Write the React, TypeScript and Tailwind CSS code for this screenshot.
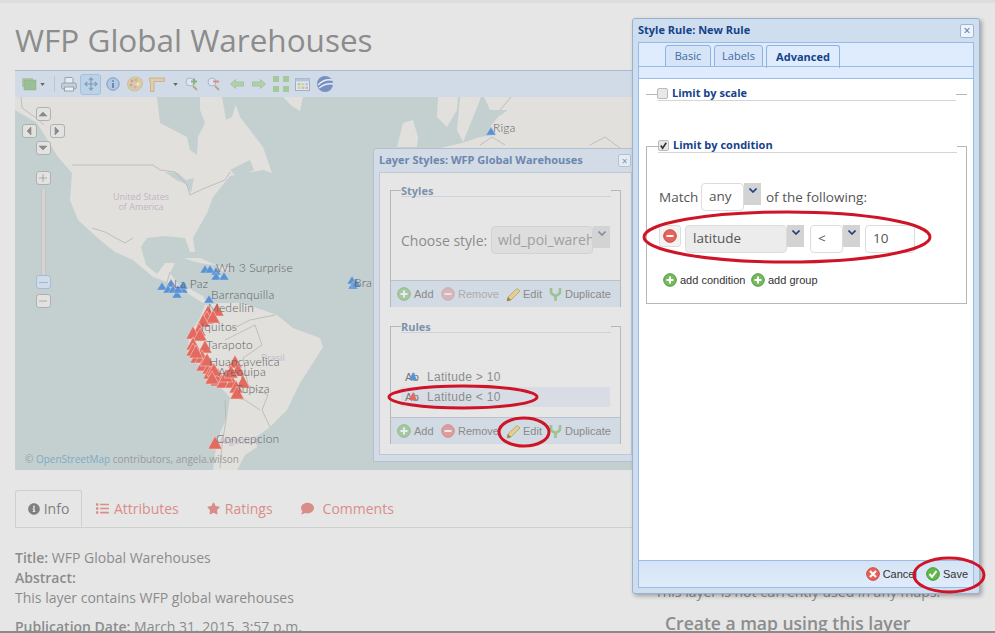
import type { ReactNode } from "react";
import { FaComment, FaInfoCircle, FaList, FaStar } from "react-icons/fa";
import { Move } from "lucide-react";

const blue = [
  [205, 269], [210, 269], [216, 271], [216, 276], [224, 276],
  [162, 286], [171, 283], [168, 289], [173, 289], [177, 294], [183, 289], [183, 285], [178, 289],
  [209, 299], [352, 280], [353, 285], [356, 283], [491, 131],
];

const red = [
  [208, 312], [217, 310], [207, 318], [213, 317], [203, 321], [199, 330], [193, 333], [200, 335],
  [193, 344], [205, 347], [193, 350], [197, 357], [202, 357], [203, 365], [209, 368], [210, 373],
  [218, 375], [217, 380], [223, 382], [235, 362], [238, 370], [232, 382], [243, 382], [236, 387],
  [237, 393], [215, 443], [196, 352], [207, 360], [214, 370], [226, 376], [231, 372], [212, 378],
];

const labels: [string, number, number][] = [
  ["Wh 3 Surprise", 216, 272],
  ["La Paz", 174, 288],
  ["Barranquilla", 211, 299],
  ["Medellin", 208, 312],
  ["Iquitos", 201, 331],
  ["Tarapoto", 206, 349],
  ["Huancavelica", 209, 366],
  ["Arequipa", 218, 376],
  ["Tupiza", 236, 393],
  ["Concepcion", 216, 443],
  ["Riga", 493, 132],
  ["Bra", 354, 287],
];

const WorldMap = () => (
  <svg viewBox="15 97 635 373" className="block h-[373px] w-[635px] bg-[#c3d0cf]">
    {/* north america */}
    <path
      fill="#e1e0dc"
      d="M15 110 L37 123 L58 157 L72 173 L70 200 L78 220 L100 240 L115 252 L133 260 L153 277 L167 282 L187 293 L203 303 L207 303 L203 296 L190 289 L178 284 L170 273 L175 263 L165 263 L157 274 L146 265 L141 247 L147 238 L165 236 L185 238 L190 252 L195 252 L193 238 L207 213 L213 197 L230 176 L263 170 L272 173 L263 147 L240 117 L233 97 L200 97 L200 110 L205 123 L198 137 L197 155 L190 150 L187 137 L160 123 L157 97 L15 97 Z"
    />
    <path fill="#c3d0cf" d="M222 97 L238 97 L232 117 L226 120 L224 108 Z" />
    <path fill="#e1e0dc" d="M283 97 L303 97 L300 111 L292 106 Z" />
    {/* great lakes */}
    <path fill="#c3d0cf" d="M165 172 L178 173 L186 180 L194 178 L191 193 L186 184 L176 180 Z" />
    <path fill="#c3d0cf" d="M230 170 L250 160 L254 170 L238 178 Z" />
    {/* caribbean */}
    <path fill="#e1e0dc" d="M184 258 L200 258 L216 265 L205 264 L192 261 Z" />
    <path fill="#e1e0dc" d="M218 266 L230 268 L226 272 L219 270 Z" />
    {/* south america */}
    <path
      fill="#e1e0dc"
      d="M205 305 L200 318 L190 333 L188 347 L197 363 L213 380 L230 397 L227 417 L217 440 L213 470 L237 470 L245 455 L257 447 L255 438 L270 427 L287 410 L300 383 L313 363 L323 347 L320 338 L293 328 L277 315 L257 308 L240 303 L220 303 Z"
    />
    {/* europe */}
    <path fill="#e1e0dc" d="M438 97 L437 117 L447 127 L457 110 L458 97 Z" />
    <path fill="#e1e0dc" d="M403 123 L413 120 L418 137 L417 147 L397 147 Z" />
    <path fill="#e1e0dc" d="M460 97 L457 130 L463 142 L470 125 L478 105 L481 97 Z" />
    <path fill="#e1e0dc" d="M484 97 L490 110 L508 110 L498 117 L490 127 L495 135 L480 137 L462 143 L440 148 L650 148 L650 97 Z" />
    {/* borders */}
    <g fill="none" stroke="#b5b5b1" strokeWidth="0.8">
      <path d="M21 97 L22 108 L35 117 L44 125 M72 165 L153 165 L160 170 L175 172 L187 185 L190 195 L205 188 L225 180 L230 172" />
      <path d="M92 228 L105 232 L125 243 L133 238 M167 282 L170 272 M230 330 L250 320 L275 315 M225 400 L226 420 L222 445 L220 468" />
      <path d="M225 340 L255 325 L262 345 L243 358 L248 385 L268 395 L262 410 L270 427 M260 410 L245 400 L232 397" />
      <path d="M511 97 L500 110 M480 145 L492 137 L505 145 M620 148 L605 137 L590 145" />
    </g>
    <text x="141" y="200" textAnchor="middle" className="fill-[#c5b3c9] text-[9px]">United States</text>
    <text x="141" y="210" textAnchor="middle" className="fill-[#c5b3c9] text-[9px]">of America</text>
    <text x="273" y="361" textAnchor="middle" className="fill-[#c5b3c9] text-[9px]">Brasil</text>
    <text x="240" y="444" textAnchor="middle" className="fill-[#c5b3c9] text-[9px]">Argentina</text>
    {blue.map(([x, y], i) => (
      <polygon key={i} points={`${x - 5},${y + 4} ${x + 5},${y + 4} ${x},${y - 4}`} fill="#5b92d6" stroke="#c8d6e0" strokeWidth="0.4" />
    ))}
    {red.map(([x, y], i) => (
      <polygon key={i} points={`${x - 7},${y + 6} ${x + 7},${y + 6} ${x},${y - 7}`} fill="#e46a60" stroke="#eed8d2" strokeWidth="0.5" />
    ))}
    {labels.map(([t, x, y]) => (
      <text key={t} x={x} y={y} className="fill-[#5f5f5f] font-['Lato',sans-serif] text-[12px] font-light tracking-[0.2px]">
        {t}
      </text>
    ))}
  </svg>
);

const MapButton = ({ d }: { d: string }) => (
  <span className="flex h-[14px] w-[15px] items-center justify-center rounded-[3px] border border-[#b0b0b0] bg-[#e2e2e0]">
    <svg viewBox="0 0 10 10" className="h-[10px] w-[10px]">
      <path d={d} fill="#8a8a8a" stroke="#8a8a8a" strokeWidth="0.6" />
    </svg>
  </span>
);

const MapControls = () => (
  <div className="absolute left-[7px] top-[10px] flex w-[42px] flex-col items-center">
    <MapButton d="M1 7 L9 7 L5 3 Z" />
    <div className="mt-[3px] flex w-[43px] justify-between">
      <MapButton d="M7 1 L7 9 L3 5 Z" />
      <MapButton d="M3 1 L3 9 L7 5 Z" />
    </div>
    <div className="mt-[3px]">
      <MapButton d="M1 3 L9 3 L5 7 Z" />
    </div>
    <div className="mt-[16px]">
      <MapButton d="M1 5 L9 5 M5 1 L5 9" />
    </div>
    <div className="mt-[4px] h-[86px] w-[5px] border-x border-[#c4c4c2] bg-[#d4d4d2]" />
    <span className="flex h-[14px] w-[15px] items-center justify-center rounded-[3px] border border-[#a9bbd4] bg-[#cfdcec]">
      <span className="h-px w-[9px] bg-[#a4b6cc]" />
    </span>
    <div className="mt-[5px]">
      <MapButton d="M1 5 L9 5" />
    </div>
  </div>
);

const ToolCaret = ({ className }: { className: string }) => (
  <svg viewBox="0 0 6 4" className={`h-[3px] w-[5px] ${className}`}>
    <path d="M0 0 L6 0 L3 4 Z" fill="#666" />
  </svg>
);

const Toolbar = () => (
  <div className="flex h-[27px] items-center border-t border-[#a9b9cc] bg-[#d1dbe7] pl-[7px]">
    {/* layers */}
    <svg viewBox="0 0 15 13" className="h-[13px] w-[15px]">
      <rect x="0" y="0" width="11" height="9" fill="#b0c4ad" />
      <rect x="2" y="2" width="12" height="10" fill="#9bbf95" stroke="#86ac82" strokeWidth="0.5" />
    </svg>
    <ToolCaret className="ml-[3px]" />
    <span className="ml-[9px] h-[16px] w-px bg-[#bcc7d4]" />
    {/* print */}
    <svg viewBox="0 0 16 16" className="ml-[6px] h-[16px] w-[16px]">
      <path d="M4 7 V1.5 H11 L12 3 V7" fill="#e8eaec" stroke="#94a3b4" />
      <rect x="0.7" y="7" width="14.6" height="6" rx="1.5" fill="#c5cfda" stroke="#94a3b4" />
      <rect x="3.5" y="11" width="9" height="4" fill="#eef0f2" stroke="#94a3b4" />
    </svg>
    <span className="ml-[3px] flex h-[21px] w-[21px] items-center justify-center rounded-[3px] border border-[#a9bfd9] bg-[#bcd2e9]">
      <Move size={14} className="text-[#7e99b6]" />
    </span>
    {/* info */}
    <svg viewBox="0 0 14 14" className="ml-[5px] h-[14px] w-[14px]">
      <circle cx="7" cy="7" r="6.2" fill="#b3c9e2" stroke="#7d9bc0" />
      <circle cx="7" cy="4" r="1" fill="#6b8ab2" />
      <rect x="6" y="6" width="2" height="5" fill="#6b8ab2" />
    </svg>
    {/* palette */}
    <svg viewBox="0 0 16 16" className="ml-[7px] h-[16px] w-[16px]">
      <path d="M8 1 C13 1 16 4 15.5 8 C15 12 11 15 7 15 C3 15 0.5 12 0.5 8 C0.5 4 4 1 8 1 Z" fill="#dfcaa0" stroke="#c0a87e" strokeWidth="0.5" />
      <circle cx="5" cy="5" r="1.5" fill="#d9998e" />
      <circle cx="9" cy="4" r="1.5" fill="#a6c396" />
      <circle cx="4" cy="9" r="1.5" fill="#9ab1d2" />
      <circle cx="8" cy="11" r="1.6" fill="#c9aece" />
      <circle cx="11" cy="8" r="1.6" fill="#e8e3d8" />
    </svg>
    {/* ruler */}
    <svg viewBox="0 0 16 15" className="ml-[6px] h-[15px] w-[16px]">
      <path d="M0.5 1 H15.5 V4.5 H5 V14.5 H1.5 V4.5 H0.5 Z" fill="#e0cdac" stroke="#bda680" strokeWidth="0.7" />
    </svg>
    <ToolCaret className="ml-[8px]" />
    {/* zoom in */}
    <svg viewBox="0 0 14 14" className="ml-[7px] h-[14px] w-[14px]">
      <circle cx="5" cy="5" r="4" fill="#dbe6f0" stroke="#a5b8cc" />
      <path d="M8 9 L12 13" stroke="#bda680" strokeWidth="2" />
      <path d="M9 1.5 V7.5 M6 4.5 H12" stroke="#86b47c" strokeWidth="2" />
    </svg>
    {/* zoom out */}
    <svg viewBox="0 0 14 14" className="ml-[8px] h-[14px] w-[14px]">
      <circle cx="5" cy="5" r="4" fill="#dbe6f0" stroke="#a5b8cc" />
      <path d="M8 9 L12 13" stroke="#bda680" strokeWidth="2" />
      <path d="M6 4.5 H12" stroke="#da8e8a" strokeWidth="2" />
    </svg>
    {/* history */}
    <svg viewBox="0 0 14 10" className="ml-[9px] h-[10px] w-[14px]">
      <path d="M0.5 5 L5.5 0.5 V3 H13.5 V7 H5.5 V9.5 Z" fill="#b2d1a8" stroke="#93b78a" strokeWidth="0.6" />
    </svg>
    <svg viewBox="0 0 14 10" className="ml-[8px] h-[10px] w-[14px]">
      <path d="M13.5 5 L8.5 0.5 V3 H0.5 V7 H8.5 V9.5 Z" fill="#b2d1a8" stroke="#93b78a" strokeWidth="0.6" />
    </svg>
    {/* extent */}
    <svg viewBox="0 0 16 16" className="ml-[7px] h-[16px] w-[16px]">
      <rect x="0" y="0" width="6" height="6" fill="#a5c99b" />
      <rect x="10" y="0" width="6" height="6" fill="#a5c99b" />
      <rect x="0" y="10" width="6" height="6" fill="#a5c99b" />
      <rect x="10" y="10" width="6" height="6" fill="#a5c99b" />
    </svg>
    {/* table */}
    <svg viewBox="0 0 15 13" className="ml-[6px] h-[13px] w-[15px]">
      <rect x="0.5" y="0.5" width="14" height="12" fill="#e3e8ee" stroke="#9ab0c8" />
      <rect x="0.5" y="0.5" width="14" height="3" fill="#b3c6da" />
      <rect x="2.5" y="5" width="3" height="2.5" fill="#b2cfa9" />
      <rect x="6.5" y="5" width="3" height="2.5" fill="#e0ca9c" />
      <rect x="10.5" y="5" width="2.5" height="2.5" fill="#b3c6da" />
      <rect x="2.5" y="8.5" width="3" height="2.5" fill="#e0ca9c" />
      <rect x="6.5" y="8.5" width="3" height="2.5" fill="#b2cfa9" />
      <rect x="10.5" y="8.5" width="2.5" height="2.5" fill="#dcb0a9" />
    </svg>
    {/* earth */}
    <svg viewBox="0 0 16 16" className="ml-[7px] h-[16px] w-[16px]">
      <circle cx="8" cy="8" r="8" fill="#7790c2" />
      <path d="M1 9 C5 5 10 3 15 4 M2 12 C6 9 11 7 16 8" stroke="#e8edf2" strokeWidth="1.4" fill="none" />
    </svg>
  </div>
);

const PlusIcon = ({ className = "" }: { className?: string }) => (
  <svg viewBox="0 0 14 14" className={`h-[14px] w-[14px] shrink-0 ${className}`}>
    <circle cx="7" cy="7" r="6.3" fill="#78b85e" stroke="#4f9a3e" />
    <path d="M7 3.5 V10.5 M3.5 7 H10.5" stroke="#fff" strokeWidth="2" />
  </svg>
);

const MinusIcon = ({ className = "" }: { className?: string }) => (
  <svg viewBox="0 0 14 14" className={`h-[14px] w-[14px] shrink-0 ${className}`}>
    <circle cx="7" cy="7" r="6.3" fill="#e8625a" stroke="#c8453f" />
    <path d="M3.5 7 H10.5" stroke="#fff" strokeWidth="2" />
  </svg>
);

const PencilIcon = () => (
  <svg viewBox="0 0 15 15" className="h-[15px] w-[15px] shrink-0">
    <path d="M1 14 L2 10 L11 1.5 L14 4 L5 13 Z" fill="#e2cf92" stroke="#b4a066" strokeWidth="0.8" />
    <path d="M1 14 L2 10 L5 13 Z" fill="#9d7f4e" />
  </svg>
);

const ForkIcon = () => (
  <svg viewBox="0 0 15 15" className="h-[15px] w-[15px] shrink-0">
    <path d="M3 1 V5 C3 8 7 8 7.5 9 C8 8 12 8 12 5 V1 M7.5 9 V14" fill="none" stroke="#9cc392" strokeWidth="2.6" />
  </svg>
);

const RuleToolbar = ({ dimRemove }: { dimRemove?: boolean }) => (
  <div className="flex h-[27px] items-center border-t border-[#b9c3cf] bg-[#d2dae3] pl-[6px] font-['Liberation_Sans',sans-serif] text-[11px] text-[#8a8a8a]">
    <span className="flex w-[44px] items-center gap-[3px]">
      <PlusIcon className="opacity-50" />
      Add
    </span>
    <span className={`flex w-[65px] items-center gap-[3px] ${dimRemove ? "text-[#adadad]" : ""}`}>
      <MinusIcon className={dimRemove ? "opacity-30" : "opacity-50"} />
      Remove
    </span>
    <span className="flex w-[42px] items-center gap-[2px]">
      <PencilIcon />
      Edit
    </span>
    <span className="flex items-center gap-[2px]">
      <ForkIcon />
      Duplicate
    </span>
  </div>
);

const Arrow = ({ dim }: { dim?: boolean }) => (
  <span className="flex h-[22px] w-[17px] items-start justify-center bg-[#d3d3d3] pt-[5px]">
    <svg viewBox="0 0 8 5" className="h-[5px] w-[8px]">
      <path d="M0.5 0.5 L4 4 L7.5 0.5" fill="none" stroke={dim ? "#7f8ea3" : "#1f3f7e"} strokeWidth="1.6" />
    </svg>
  </span>
);

const DimLegend = ({ children }: { children: string }) => (
  <legend className="ml-[10px] h-[14px] w-[210px] border-b border-[#cfd3d7] pt-[2px] text-[11px] leading-[12px] font-bold text-[#7d92ae]">
    {children}
  </legend>
);

const AbIcon = ({ color }: { color: string }) => (
  <span className="relative w-[22px] text-[11px] text-[#777]">
    Ab
    <svg viewBox="0 0 8 8" className="absolute left-[4px] top-[2px] h-[10px] w-[8px]">
      <polygon points="0,8 8,8 4,0" fill={color} />
    </svg>
  </span>
);

const LayerStylesWindow = () => (
  <div className="absolute left-[373px] top-[148px] z-10 h-[314px] w-[262px] rounded-t-[3px] border border-[#b3c0d0] bg-[#d2dbe6] pl-[5px] pr-[2px] font-['Open_Sans',sans-serif]">
    <div className="flex h-[23px] items-center justify-between">
      <span className="text-[11px] font-bold text-[#6c87ad]">Layer Styles: WFP Global Warehouses</span>
      <span className="mr-px flex h-[13px] w-[13px] items-center justify-center rounded-[2px] border border-[#b4c3d4] bg-[#e6ebf1] text-[10px] leading-none text-[#7d90a8]">
        ×
      </span>
    </div>
    <div className="h-[283px] border border-[#bcc8d6] bg-[#e6e6e6] px-[10px] pt-[10px]">
      <fieldset className="h-[124px] border border-[#b5b8bb]">
        <DimLegend>Styles</DimLegend>
        <div className="flex h-[110px] flex-col">
          <div className="flex flex-1 items-center pl-[10px] pt-[3px] text-[14px] text-[#8c8c8c]">
            <span className="w-[90px]">Choose style:</span>
            <span className="h-[28px] w-[102px] overflow-hidden whitespace-nowrap rounded-[4px] border border-[#d2d2d2] bg-[#dedede] px-[6px] text-[14px] leading-[26px] text-[#a0a0a0]">
              wld_poi_warehouses
            </span>
            <span className="mb-[6px]">
              <Arrow dim />
            </span>
          </div>
          <RuleToolbar dimRemove />
        </div>
      </fieldset>
      <fieldset className="mt-[12px] h-[125px] border border-[#b5b8bb]">
        <DimLegend>Rules</DimLegend>
        <div className="flex h-[111px] flex-col">
          <div className="flex-1 px-[10px] pt-[34px] font-['Liberation_Sans',sans-serif] text-[12px] tracking-[0.3px] text-[#8c8c8c]">
            <div className="flex h-[20px] items-center pl-[4px]">
              <AbIcon color="#5b92d6" />
              Latitude &gt; 10
            </div>
            <div className="flex h-[20px] items-center bg-[#d8dde5] pl-[4px]">
              <AbIcon color="#e46a60" />
              Latitude &lt; 10
            </div>
          </div>
          <RuleToolbar />
        </div>
      </fieldset>
    </div>
  </div>
);

const Field = ({ children, className }: { children: ReactNode; className: string }) => (
  <span className={`flex h-[28px] items-center rounded-[4px] border border-[#dcdcdc] px-[7px] text-[13.5px] leading-none text-[#555] ${className}`}>
    {children}
  </span>
);

const StyleRuleWindow = () => (
  <div className="absolute left-[632px] top-[18px] z-20 h-[576px] w-[348px] rounded-[3px] border border-[#99b2d0] bg-[#cfdeef] px-[5px] shadow-[2px_2px_4px_rgba(0,0,0,0.3)] font-['Open_Sans',sans-serif]">
    <div className="flex h-[23px] items-center justify-between">
      <span className="text-[11px] font-bold text-[#15428b]">Style Rule: New Rule</span>
      <span className="flex h-[14px] w-[14px] items-center justify-center rounded-[2px] border border-[#9db6d4] bg-[#eef3fa] text-[12px] leading-none text-[#3f6ea5]">
        ×
      </span>
    </div>
    <div className="flex h-[546px] flex-col border border-[#99bbe8]">
      <div className="flex h-[36px] items-start border-b border-[#99bbe8] bg-[#deecfd] pl-[26px]">
        <div className="flex h-[24px] gap-[3px] pt-[2px] text-[11px]">
          <span className="flex w-[46px] items-center justify-center rounded-t-[3px] border border-[#8db2e3] bg-[#d5e4f7] text-[#416aa3]">Basic</span>
          <span className="flex w-[49px] items-center justify-center rounded-t-[3px] border border-[#8db2e3] bg-[#d5e4f7] text-[#416aa3]">Labels</span>
          <span className="flex h-[23px] w-[74px] items-center justify-center rounded-t-[3px] border border-b-0 border-[#8db2e3] bg-[#deecfd] font-bold text-[#15428b]">Advanced</span>
        </div>
      </div>
      <div className="-mt-[13px] h-px bg-[#99bbe8]" />
      <div className="mt-[12px] flex-1 bg-white pl-[7px] pr-[6px] pt-[8px]">
        <fieldset className="border-0 border-t border-[#b5b8bb]">
          <legend className="ml-[11px] flex h-[14px] w-[299px] items-center gap-[4px] border-b border-[#d5d5d5] text-[11px] font-bold text-[#15428b]">
            <span className="h-[11px] w-[11px] rounded-[2px] border border-[#bbb] bg-[#e8e8e8]" />
            Limit by scale
          </legend>
        </fieldset>
        <fieldset className="mt-[38px] h-[165px] border border-[#b5b8bb]">
          <legend className="ml-[11px] flex h-[14px] w-[299px] items-center gap-[4px] border-b border-[#d5d5d5] text-[11px] font-bold text-[#15428b]">
            <span className="flex h-[11px] w-[11px] items-center justify-center rounded-[2px] border border-[#bbb] bg-[#e8e8e8]">
              <svg viewBox="0 0 10 10" className="h-[9px] w-[9px]">
                <path d="M2 5 L4 8 L8 2" fill="none" stroke="#333" strokeWidth="1.8" />
              </svg>
            </span>
            Limit by condition
          </legend>
          <div className="flex items-start pl-[12px] pt-[30px] text-[13.5px] text-[#555]">
            <span className="mt-[4px] w-[42px]">Match</span>
            <Field className="w-[43px]">any</Field>
            <Arrow />
            <span className="ml-[5px] mt-[4px]">of the following:</span>
          </div>
          <div className="mt-[14px] flex items-start pl-[12px]">
            <span className="flex h-[22px] w-[22px] items-center justify-center rounded-[3px] border border-[#ddd] bg-[#f3f3f3]">
              <MinusIcon />
            </span>
            <Field className="ml-[4px] w-[102px] bg-[#ececec]">latitude</Field>
            <Arrow />
            <Field className="ml-[6px] w-[33px]">&lt;</Field>
            <Arrow />
            <Field className="ml-[5px] w-[50px]">10</Field>
          </div>
          <div className="mt-[19px] flex items-center pl-[16px] font-['Liberation_Sans',sans-serif] text-[11px] text-[#333]">
            <PlusIcon />
            <span className="ml-[3px] w-[71px]">add condition</span>
            <PlusIcon />
            <span className="ml-[3px]">add group</span>
          </div>
        </fieldset>
      </div>
      <div className="flex h-[27px] items-center justify-end gap-[9px] border-t border-[#99bbe8] bg-linear-to-b from-[#d5e3f4] to-[#e0ecfb] pr-[5px] font-['Liberation_Sans',sans-serif] text-[11px] text-[#333]">
        <span className="flex items-center gap-[3px]">
          <svg viewBox="0 0 14 14" className="h-[14px] w-[14px]">
            <circle cx="7" cy="7" r="6.3" fill="#e8625a" stroke="#c8453f" />
            <path d="M4 4 L10 10 M10 4 L4 10" stroke="#fff" strokeWidth="2" />
          </svg>
          Cancel
        </span>
        <span className="flex items-center gap-[3px]">
          <svg viewBox="0 0 14 14" className="h-[14px] w-[14px]">
            <circle cx="7" cy="7" r="6.3" fill="#62b84a" stroke="#3f9a30" />
            <path d="M3.5 7 L6 10 L10.5 4" fill="none" stroke="#fff" strokeWidth="2" />
          </svg>
          Save
        </span>
      </div>
    </div>
  </div>
);

const Annotations = () => (
  <svg viewBox="0 0 995 633" className="pointer-events-none absolute inset-0 z-30 h-[633px] w-[995px]">
    <g fill="none" stroke="#cf1428" strokeWidth="3">
      <ellipse cx="787" cy="237" rx="143" ry="25" />
      <ellipse cx="463" cy="397" rx="74" ry="11" />
      <ellipse cx="524" cy="432" rx="25" ry="14" />
      <ellipse cx="949" cy="575" rx="35" ry="17" />
    </g>
  </svg>
);

const tabClass = "flex items-center gap-[5px] px-[14px] text-[#d98d89]";

const App = () => {
  return (
    <div className="relative h-[633px] w-[995px] overflow-hidden border-b-2 border-[#8a8a8a] bg-[#e6e6e6] font-['Open_Sans',sans-serif] text-[14px] text-[#8c8c8c]">
      <div className="h-[3px] bg-[#dddddd]" />
      <div className="flex pl-[15px]">
        <div className="w-[635px] shrink-0">
          <h1 className="mt-[15px] text-[31.5px] leading-[44px] text-[#8c8c8c]">WFP Global Warehouses</h1>
          <div className="mt-[8px]">
            <Toolbar />
            <div className="relative overflow-hidden">
              <WorldMap />
              <MapControls />
              <div className="absolute left-[10px] top-[355px] text-[10px] text-[#9a9a9a]">
                © <span className="text-[#7faac4]">OpenStreetMap</span> contributors, angela.wilson
              </div>
            </div>
          </div>
          <div className="mt-[20px] flex h-[38px] border-b border-[#cfcfcf]">
            <span className="flex w-[67px] items-center justify-center gap-[4px] rounded-t-[3px] border border-[#cfcfcf] border-b-[#e6e6e6] bg-[#e6e6e6] text-[#808080]">
              <FaInfoCircle size={12} />
              Info
            </span>
            <span className={tabClass}>
              <FaList size={13} />
              Attributes
            </span>
            <span className={tabClass}>
              <FaStar size={13} />
              Ratings
            </span>
            <span className={`${tabClass} gap-[9px]`}>
              <FaComment size={13} />
              Comments
            </span>
          </div>
          <div className="mt-[20px] leading-[20px]">
            <p>
              <b className="font-semibold">Title:</b> WFP Global Warehouses
            </p>
            <p className="font-semibold">Abstract:</p>
            <p>This layer contains WFP global warehouses</p>
            <p className="mt-[9px]">
              <b className="font-semibold">Publication Date:</b> March 31, 2015, 3:57 p.m.
            </p>
          </div>
        </div>
        <div className="pl-[5px] pt-[579px]">
          <p className="whitespace-nowrap leading-[20px]">This layer is not currently used in any maps.</p>
          <p className="mt-[9px] whitespace-nowrap pl-[10px] text-[17.5px] font-semibold leading-[24px]">Create a map using this layer</p>
        </div>
      </div>
      <LayerStylesWindow />
      <StyleRuleWindow />
      <Annotations />
    </div>
  );
};

export default App;
